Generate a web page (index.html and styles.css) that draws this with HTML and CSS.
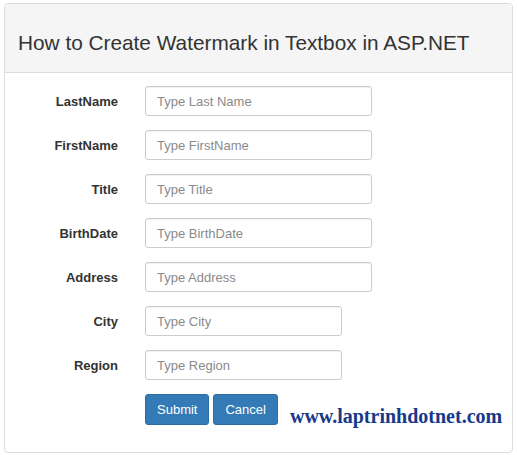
FILE: index.html
```html
<!DOCTYPE html>
<html>
<head>
<meta charset="utf-8">
<link rel="stylesheet" href="styles.css">
</head>
<body>
<div class="panel">
  <div class="panel-heading">
    <h3 class="panel-title">How to Create Watermark in Textbox in ASP.NET</h3>
  </div>
  <div class="panel-body">
    <form class="form">
      <label class="lbl">LastName</label>
      <input class="field" type="text" placeholder="Type Last Name">
      <label class="lbl">FirstName</label>
      <input class="field" type="text" placeholder="Type FirstName">
      <label class="lbl">Title</label>
      <input class="field" type="text" placeholder="Type Title">
      <label class="lbl">BirthDate</label>
      <input class="field" type="text" placeholder="Type BirthDate">
      <label class="lbl">Address</label>
      <input class="field" type="text" placeholder="Type Address">
      <label class="lbl">City</label>
      <input class="field short" type="text" placeholder="Type City">
      <label class="lbl">Region</label>
      <input class="field short" type="text" placeholder="Type Region">
      <span></span>
      <div class="actions">
        <button type="button" class="btn">Submit</button>
        <button type="button" class="btn">Cancel</button>
        <span class="watermark">www.laptrinhdotnet.com</span>
      </div>
    </form>
  </div>
</div>
</body>
</html>
```
FILE: styles.css
```css
html, body {
  margin: 0;
  padding: 0;
  background: #fff;
}
body {
  padding: 3px 4px 3px 4px;
  font-family: "Liberation Sans", Arial, sans-serif;
  color: #333;
}
.panel {
  width: 509px;
  height: 450px;
  box-sizing: border-box;
  border: 1px solid #dcdcdc;
  border-radius: 4px;
  overflow: hidden;
}
.panel-heading {
  background: #f5f5f5;
  border-bottom: 1px solid #dcdcdc;
  height: 69px;
  box-sizing: border-box;
  display: flex;
  align-items: center;
  padding: 9px 13px 0 13px;
}
.panel-title {
  margin: 0;
  font-weight: normal;
  font-size: 20.8px;
  color: #333;
  white-space: nowrap;
}
.panel-body {
  padding: 13px 0 0 0;
}
.form {
  display: grid;
  grid-template-columns: 113px auto;
  column-gap: 27px;
  row-gap: 14px;
  justify-items: start;
}
.lbl {
  justify-self: end;
  align-self: center;
  font-weight: bold;
  font-size: 13px;
  color: #333;
}
.field {
  width: 227px;
  height: 30px;
  box-sizing: border-box;
  border: 1px solid #cccccc;
  border-radius: 3px;
  padding: 0 11px;
  font-family: "Liberation Sans", Arial, sans-serif;
  font-size: 13px;
  color: #555;
  box-shadow: inset 0 1px 1px rgba(0,0,0,0.06);
  outline: none;
}
.field::placeholder {
  color: #8a8a8a;
}
.field.short {
  width: 197px;
}
.actions {
  display: flex;
  align-items: flex-start;
  gap: 4px;
}
.btn {
  height: 31px;
  box-sizing: border-box;
  padding: 0 11px;
  background: #337ab7;
  border: 1px solid #2e6da4;
  border-radius: 3px;
  color: #fff;
  font-family: "Liberation Sans", Arial, sans-serif;
  font-size: 13px;
}
.watermark {
  margin-left: 8px;
  margin-top: 11px;
  font-family: "Liberation Serif", "Times New Roman", serif;
  font-weight: bold;
  font-size: 20px;
  color: #16398a;
  white-space: nowrap;
}
```
